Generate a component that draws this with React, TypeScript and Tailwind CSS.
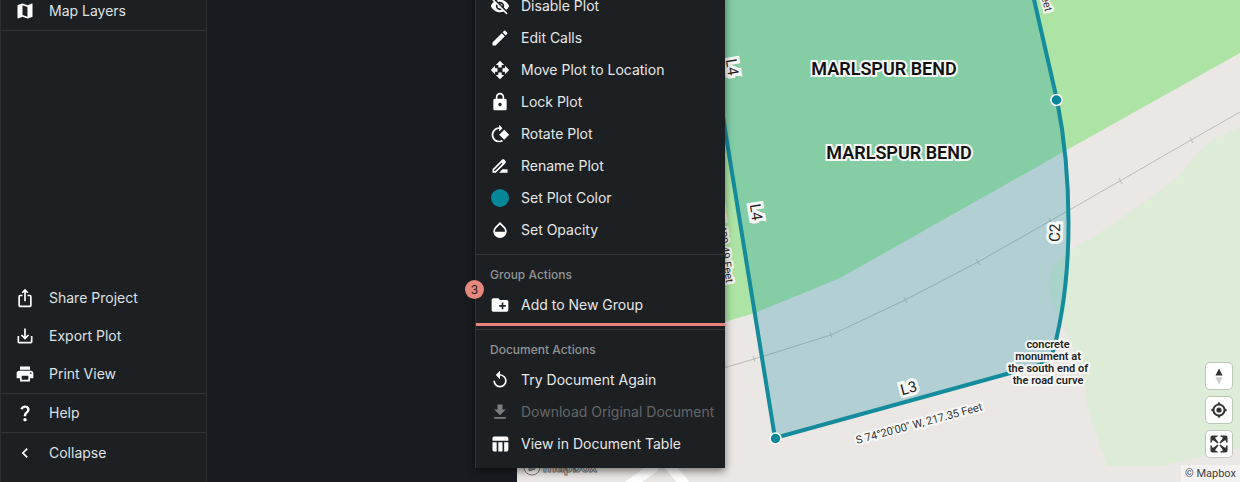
import type { IconType } from 'react-icons';
import {
  MdChevronLeft,
  MdCreateNewFolder,
  MdDriveFileRenameOutline,
  MdEdit,
  MdFileDownload,
  MdIosShare,
  MdLock,
  MdMap,
  MdOpacity,
  MdOpenWith,
  MdPrint,
  MdQuestionMark,
  MdReplay,
  MdRotate90DegreesCw,
  MdSaveAlt,
  MdTableChart,
  MdVisibilityOff,
} from 'react-icons/md';

type Item = {
  label: string;
  icon?: IconType;
  disabled?: boolean;
};

const projectItems: Item[] = [
  { label: 'Share Project', icon: MdIosShare },
  { label: 'Export Plot', icon: MdSaveAlt },
  { label: 'Print View', icon: MdPrint },
];

const plotActions: Item[] = [
  { label: 'Disable Plot', icon: MdVisibilityOff },
  { label: 'Edit Calls', icon: MdEdit },
  { label: 'Move Plot to Location', icon: MdOpenWith },
  { label: 'Lock Plot', icon: MdLock },
  { label: 'Rotate Plot', icon: MdRotate90DegreesCw },
  { label: 'Rename Plot', icon: MdDriveFileRenameOutline },
  { label: 'Set Plot Color' },
  { label: 'Set Opacity', icon: MdOpacity },
];

const documentActions: Item[] = [
  { label: 'Try Document Again', icon: MdReplay },
  { label: 'Download Original Document', icon: MdFileDownload, disabled: true },
  { label: 'View in Document Table', icon: MdTableChart },
];

function SidebarItem({ label, icon: Icon }: Item) {
  return (
    <button type="button" className="flex h-[38px] w-full shrink-0 items-center gap-3.5 pl-3.5 text-left text-sm text-[#dfe1e2]">
      {Icon && <Icon className="size-5 shrink-0 text-white" />}
      {label}
    </button>
  );
}

function MenuItem({ label, icon: Icon, disabled }: Item) {
  return (
    <button
      type="button"
      disabled={disabled}
      className="flex h-8 w-full items-center gap-[11px] pl-3.5 text-left text-sm whitespace-nowrap text-[#e6e7e8] disabled:text-[#636669]"
    >
      {Icon ? (
        <Icon className={`size-5 shrink-0 ${disabled ? 'text-[#7b7e80]' : 'text-white'}`} />
      ) : (
        <span className="mx-px size-[18px] shrink-0 rounded-full bg-[#068799]" />
      )}
      {label}
    </button>
  );
}

function Sidebar() {
  return (
    <nav className="flex w-[207px] shrink-0 flex-col border-x border-[#2b2f32] bg-[#1c2023]">
      <div className="flex h-[31px] flex-col justify-end border-b border-[#303437]">
        <SidebarItem label="Map Layers" icon={MdMap} />
      </div>
      <div className="mt-auto">
        {projectItems.map((item) => (
          <SidebarItem key={item.label} {...item} />
        ))}
      </div>
      <div className="border-y border-[#303437]">
        <SidebarItem label="Help" icon={MdQuestionMark} />
      </div>
      <div className="pt-px pb-2.5">
        <SidebarItem label="Collapse" icon={MdChevronLeft} />
      </div>
    </nav>
  );
}

function PlotMenu() {
  return (
    <div className="absolute bottom-3.5 left-[475px] w-[250px] border-l border-[#303437] bg-[#1d2022] pb-2 shadow-[0_3px_8px_rgba(0,0,0,0.5)]">
      <section className="pb-2">
        {plotActions.map((item) => (
          <MenuItem key={item.label} {...item} />
        ))}
      </section>
      <section className="relative border-t border-[#33373a] pt-1.5 pb-2">
        <h2 className="h-7 pl-3.5 text-xs leading-7 font-medium text-[#909395]">Group Actions</h2>
        <MenuItem label="Add to New Group" icon={MdCreateNewFolder} />
        <span className="absolute inset-x-0 bottom-[3px] h-[3px] bg-[#e4837a]" />
        <span className="absolute top-[25px] -left-[11px] flex size-[19px] items-center justify-center rounded-full bg-[#e5877d] text-xs text-[#231c1c]">
          3
        </span>
      </section>
      <section className="border-t border-[#33373a] pt-1.5">
        <h2 className="h-7 pl-3.5 text-xs leading-7 font-medium text-[#909395]">Document Actions</h2>
        {documentActions.map((item) => (
          <MenuItem key={item.label} {...item} />
        ))}
      </section>
    </div>
  );
}

const halo = 'stroke-[#f6f8f6] [paint-order:stroke] [stroke-linejoin:miter]';
const note = ['concrete', 'monument at', 'the south end of', 'the road curve'];

function PlotMap() {
  return (
    <svg
      viewBox="517 0 723 482"
      preserveAspectRatio="xMinYMin slice"
      className="absolute inset-0 size-full font-[Roboto,sans-serif]"
      role="img"
      aria-label="Plot map"
    >
      {/* terrain */}
      <path d="M517 0H1240V482H517z" fill="#ebe7e4" />
      <path d="M517 0H1240V53L1065 151L840 278L755 313L724 322L517 365z" fill="#ade4a5" />
      <path d="M1240 127L1212 140L1196 155L1180 175L1150 198L1110 226L1072 250L1054 265Q1044 284 1053 302L1083 370L1088 410L1107 466L1160 466L1240 448z" fill="#dcecd7" />
      <path d="M625 488L656 466M668 464L688 488" stroke="#fff" strokeWidth="10" />

      {/* railway */}
      <g fill="none" stroke="#bdbab9" strokeWidth="1">
        <path d="M720 369L754 359L831 335L905 300L978 262L1050 221L1120 181L1191 140L1240 112" />
        <path d="M753 356l2 6M830 332l2 6M904 297l3 6M976 259l4 6M1049 218l3 6M1119 178l3 6M1190 137l3 6" />
      </g>

      {/* plot */}
      <path d="M704 0L775 438L1050 362C1077 275 1070 165 1057 100L1033 -5z" fill="#0f8aa6" fillOpacity=".26" />
      <path d="M704 0L775 438L1050 362C1077 275 1070 165 1057 100L1033 -5" fill="none" stroke="#148c9c" strokeWidth="4" />
      <g fill="#068799" stroke="#fff" strokeWidth="1.5">
        <circle cx="775.5" cy="438.5" r="5.5" />
        <circle cx="1056.5" cy="100" r="5.5" />
      </g>

      {/* labels */}
      <g fill="#111" fontSize="18" fontWeight="600" strokeWidth="4" textAnchor="middle" className={halo}>
        <text x="884" y="75">MARLSPUR BEND</text>
        <text x="899" y="159">MARLSPUR BEND</text>
      </g>
      <g fill="#222" fontSize="15" strokeWidth="6" textAnchor="middle" className={halo}>
        <text transform="translate(727 68) rotate(81)">L4</text>
        <text transform="translate(751 213) rotate(81)">L4</text>
        <text transform="translate(1060 233) rotate(-89)">C2</text>
        <text transform="translate(910 393) rotate(-15)">L3</text>
      </g>
      <g fill="#333" fontSize="11" strokeWidth="4" className={halo}>
        <text transform="translate(920 427) rotate(-15)" textAnchor="middle">S 74°20'00" W, 217.35 Feet</text>
        <text transform="translate(726 283) rotate(82)" textAnchor="end">N 08°10'00" W, 409.49 Feet</text>
        <text transform="translate(1045 12) rotate(76)" textAnchor="end">217.35 Feet</text>
      </g>
      <g fill="#222" fontSize="11" fontWeight="600" strokeWidth="4" textAnchor="middle" className={halo}>
        {note.map((line, i) => (
          <text key={line} x="1048" y={348 + i * 12}>{line}</text>
        ))}
      </g>
      <g fill="#fff" fillOpacity=".7" stroke="#7c7a78" strokeWidth="1">
        <circle cx="532" cy="467" r="8" />
        <path d="M529 463h6v6l-6 2z" fill="#7c7a78" />
        <text x="543" y="472" fontSize="15" fontWeight="700">mapbox</text>
      </g>
    </svg>
  );
}

const controlClass = 'flex size-[26px] items-center justify-center rounded bg-white ring-1 ring-black/15';

function MapControls() {
  return (
    <div className="absolute right-0 bottom-0 flex flex-col items-end">
      <div className="mr-2 mb-2 flex flex-col gap-2">
        <button type="button" aria-label="Reset bearing to north" className={controlClass}>
          <svg viewBox="0 0 29 29" className="size-[26px]">
            <path d="M10.5 14l4-8 4 8h-8z" fill="#333" />
            <path d="M10.5 16l4 8 4-8h-8z" fill="#ccc" />
          </svg>
        </button>
        <button type="button" aria-label="Find my location" className={controlClass}>
          <svg viewBox="0 0 20 20" className="size-[26px]" fill="#333">
            <path d="M10 4C9 4 9 5 9 5v.1A5 5 0 0 0 5.1 9H5s-1 0-1 1 1 1 1 1h.1A5 5 0 0 0 9 14.9v.1s0 1 1 1 1-1 1-1v-.1a5 5 0 0 0 3.9-3.9h.1s1 0 1-1-1-1-1-1h-.1A5 5 0 0 0 11 5.1V5s0-1-1-1zm0 2.5a3.5 3.5 0 1 1 0 7 3.5 3.5 0 1 1 0-7z" />
            <circle cx="10" cy="10" r="2" />
          </svg>
        </button>
        <button type="button" aria-label="Enter fullscreen" className={controlClass}>
          <svg viewBox="0 0 29 29" className="size-[26px]" fill="#333">
            <path d="M24 16v5.5c0 1.75-.75 2.5-2.5 2.5H16v-1l3-1.5-4-5.5 1-1 5.5 4 1.5-3h1zM6 16l1.5 3 5.5-4 1 1-4 5.5 3 1.5v1H7.5C5.75 24 5 23.25 5 21.5V16h1zm7-11v1l-3 1.5 4 5.5-1 1-5.5-4L6 13H5V7.5C5 5.75 5.75 5 7.5 5H13zm11 2.5c0-1.75-.75-2.5-2.5-2.5H16v1l3 1.5-4 5.5 1 1 5.5-4 1.5 3h1V7.5z" />
          </svg>
        </button>
      </div>
      <a href="#mapbox" className="bg-white/50 px-1 font-[Roboto,sans-serif] text-[11px] leading-[17px] text-[#404040]">
        © Mapbox
      </a>
    </div>
  );
}

export default function App() {
  return (
    <div className="relative flex h-screen overflow-hidden bg-[#181c20] font-[Inter,sans-serif]">
      <Sidebar />
      <div className="w-[310px] shrink-0" />
      <main className="relative min-w-0 flex-1 overflow-hidden">
        <PlotMap />
        <MapControls />
      </main>
      <PlotMenu />
    </div>
  );
}
